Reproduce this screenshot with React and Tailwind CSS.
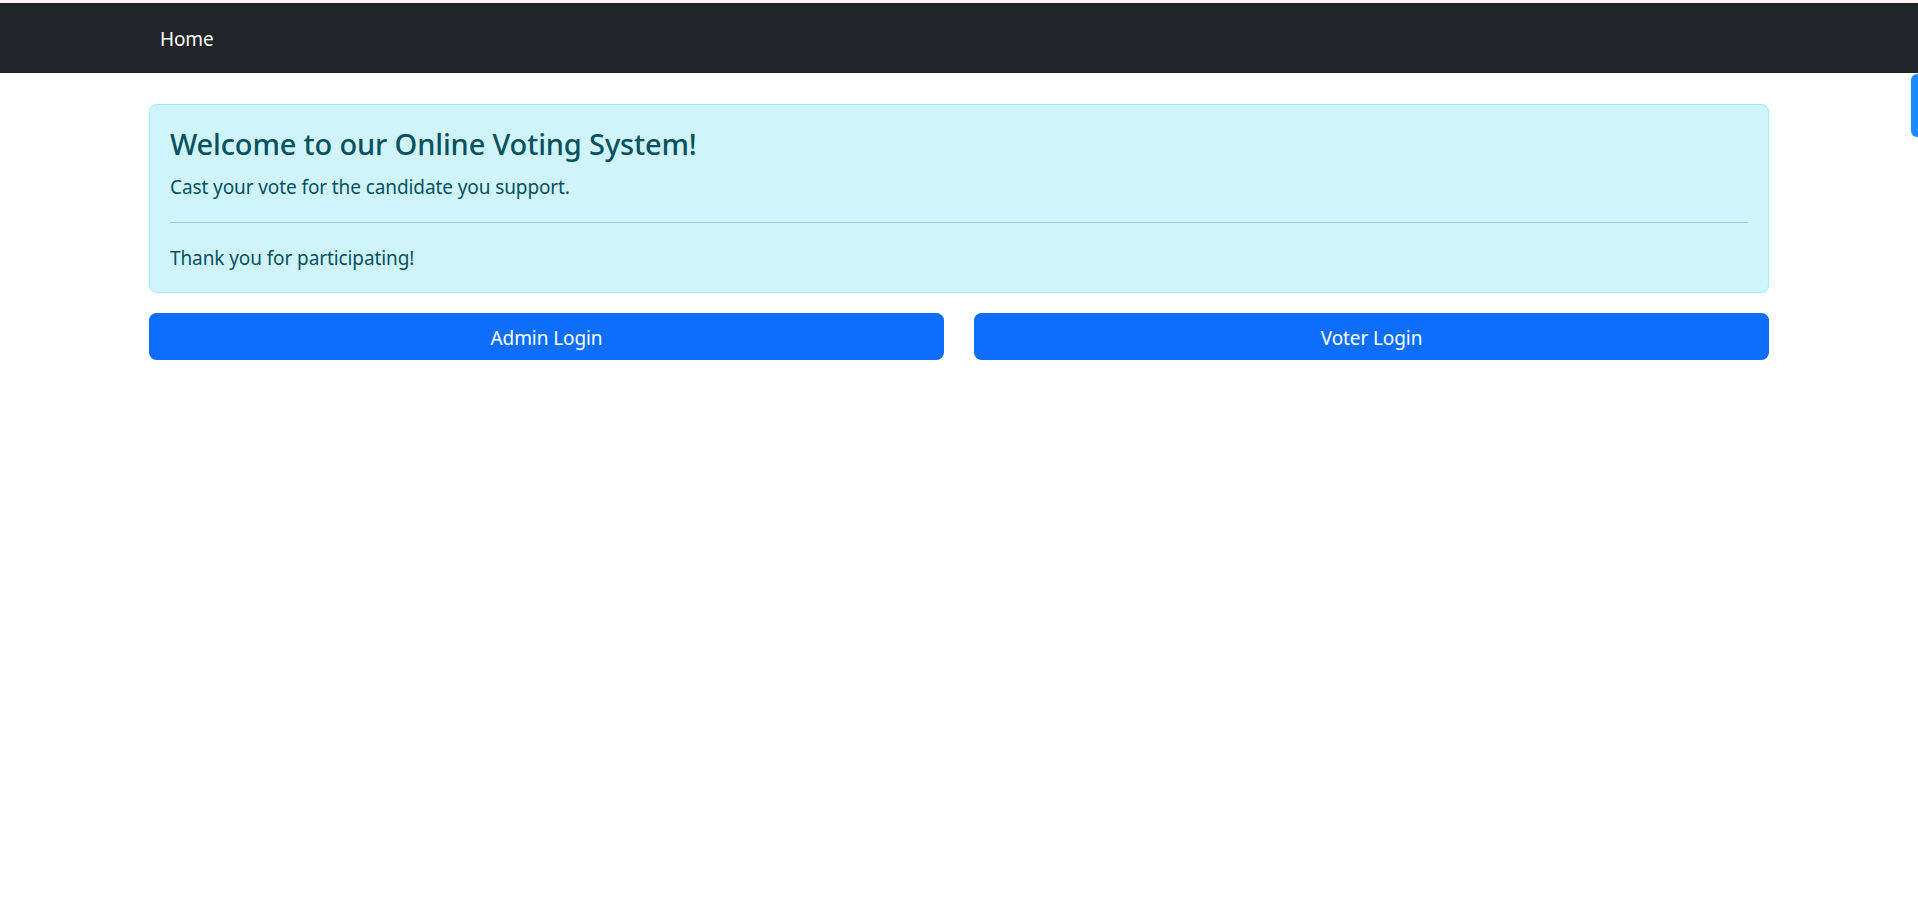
import React from 'react';

const App = () => {
  return (
    <div className="min-h-[908px] bg-white font-['Noto_Sans',sans-serif] relative">
      <div className="h-[3px] bg-[#fbf3f6]" />
      <nav className="h-[70px] bg-[#212529] flex items-center pt-[2px]">
        <div className="w-[1650px] mx-auto px-[15px]">
          <a href="#" className="text-white text-[19px] tracking-[-0.1px] leading-[30px] px-[11px]">Home</a>
        </div>
      </nav>

      <div className="w-[1650px] mx-auto px-[15px] pt-[31px]">
        <div className="bg-[#cff4fc] border border-[#9eeaf9] rounded-[7.5px] text-[#055160] px-[20px] pt-[21px] pb-[19px] mb-[20px]">
          <h4 className="text-[29px] tracking-[-0.15px] leading-[36px] font-medium mb-[10px]">Welcome to our Online Voting System!</h4>
          <p className="text-[19px] tracking-[-0.1px] leading-[30px]">Cast your vote for the candidate you support.</p>
          <hr className="my-[20px] border-t border-[#055160] opacity-25" />
          <p className="text-[19px] tracking-[-0.1px] leading-[30px]">Thank you for participating!</p>
        </div>

        <div className="grid grid-cols-2 gap-[30px]">
          <button className="h-[47px] pt-[3px] bg-[#0d6efd] text-white text-[19px] tracking-[-0.1px] rounded-[7.5px]">Admin Login</button>
          <button className="h-[47px] pt-[3px] bg-[#0d6efd] text-white text-[19px] tracking-[-0.1px] rounded-[7.5px]">Voter Login</button>
        </div>
      </div>

      <div className="absolute right-0 top-[74px] w-[7px] h-[63px] bg-[#1a8cff] rounded-l-[6px]" />
    </div>
  );
};

export default App;
